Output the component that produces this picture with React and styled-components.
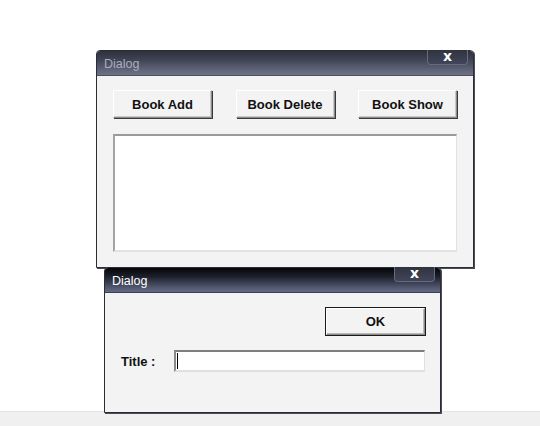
import React from "react"
import styled, { createGlobalStyle } from "styled-components"

const GlobalStyle = createGlobalStyle`
  html, body {
    margin: 0;
    padding: 0;
    background: #ffffff;
    font-family: "Liberation Sans", Arial, sans-serif;
  }
`

const Page = styled.div`
  width: 540px;
  height: 426px;
  display: flex;
  flex-direction: column;
  overflow: hidden;
`

const Desktop = styled.div`
  position: relative;
  flex: 1;
  background: #ffffff;
`

const BottomStrip = styled.div`
  height: 14px;
  background: #f0f0f0;
  border-top: 1px solid #e4e4e4;
`

const Window = styled.div`
  position: absolute;
  left: ${p => p.x}px;
  top: ${p => p.y}px;
  width: ${p => p.w}px;
  height: ${p => p.h}px;
  box-sizing: border-box;
  display: flex;
  flex-direction: column;
  background: #f3f3f3;
  border: 1px solid #2a2d36;
  border-radius: 4px 4px 0 0;
  box-shadow: 1px 1px 0 #4a4d56;
  z-index: ${p => p.z};
`

const TitleBar = styled.div`
  position: relative;
  height: ${p => p.h}px;
  flex-shrink: 0;
  display: flex;
  align-items: center;
  padding-left: 7px;
  border-radius: 3px 3px 0 0;
  background: ${p =>
    p.active
      ? "linear-gradient(to bottom, #050608 0%, #1c1f2a 35%, #50566e 80%, #646a84 100%)"
      : "linear-gradient(to bottom, #2e313c 0%, #3e4252 35%, #606579 80%, #6c7186 100%)"};
  border-bottom: 1px solid ${p => (p.active ? "#3a3f52" : "#4a4e5e")};
`

const TitleText = styled.span`
  font-size: 12.5px;
  color: ${p => (p.active ? "#ffffff" : "#a9adbd")};
  padding-top: 1px;
`

const CloseTab = styled.div`
  position: absolute;
  top: -1px;
  right: ${p => p.right}px;
  width: 41px;
  height: 15px;
  box-sizing: border-box;
  display: flex;
  align-items: center;
  justify-content: center;
  background: linear-gradient(to bottom, #30333e, #41455a);
  border: 1px solid #656a7c;
  border-top: none;
  border-radius: 0 0 4px 4px;
  color: #ffffff;
  font-family: "DejaVu Sans", sans-serif;
  font-weight: bold;
  font-size: 14px;
  line-height: 1;
  padding-bottom: 2px;
`

const Body = styled.div`
  flex: 1;
  display: flex;
  flex-direction: column;
  padding: ${p => p.pad};
`

const ButtonRow = styled.div`
  display: flex;
  justify-content: ${p => p.justify || "space-between"};
`

const Button = styled.div`
  width: 99px;
  height: ${p => (p.isDefault ? 27 : 28)}px;
  box-sizing: border-box;
  display: flex;
  align-items: center;
  justify-content: center;
  background: #f3f3f3;
  font-size: 13px;
  font-weight: bold;
  color: #111111;
  border-top: 1px solid #ffffff;
  border-left: 1px solid #ffffff;
  border-right: 1px solid #8a8a8a;
  border-bottom: 1px solid #8a8a8a;
  box-shadow: ${p =>
    p.isDefault
      ? "0 0 0 1px #1a1a1a, inset -1px -1px 0 #b8b8b8"
      : "1px 1px 0 #3a3a3a, inset -1px -1px 0 #c8c8c8"};
`

const ListBox = styled.div`
  margin-top: 16px;
  height: 118px;
  box-sizing: border-box;
  background: #ffffff;
  border-top: 2px solid #9a9a9a;
  border-left: 2px solid #a4a4a4;
  border-right: 1px solid #e2e2e2;
  border-bottom: 2px solid #e2e2e2;
`

const FieldRow = styled.div`
  margin-top: 15px;
  display: flex;
  align-items: center;
`

const Label = styled.span`
  width: 53px;
  font-size: 13px;
  font-weight: bold;
  color: #111111;
`

const TextInput = styled.div`
  width: 251px;
  height: 22px;
  box-sizing: border-box;
  background: #ffffff;
  border-top: 2px solid #7e7e7e;
  border-left: 2px solid #8a8a8a;
  border-right: 1px solid #e0e0e0;
  border-bottom: 2px solid #e0e0e0;
  display: flex;
  align-items: center;
  padding-left: 1px;
`

const Caret = styled.span`
  width: 1px;
  height: 16px;
  background: #000000;
`

export default function App() {
  return (
    <Page>
      <GlobalStyle />
      <Desktop>
        <Window x={96} y={50} w={378} h={218} z={1}>
          <TitleBar h={24}>
            <TitleText>Dialog</TitleText>
            <CloseTab right={5}>x</CloseTab>
          </TitleBar>
          <Body pad="14px 16px 16px 16px">
            <ButtonRow>
              <Button>Book Add</Button>
              <Button>Book Delete</Button>
              <Button>Book Show</Button>
            </ButtonRow>
            <ListBox />
          </Body>
        </Window>

        <Window x={104} y={267} w={337} h={146} z={2}>
          <TitleBar h={24} active>
            <TitleText active>Dialog</TitleText>
            <CloseTab right={5}>x</CloseTab>
          </TitleBar>
          <Body pad="15px 15px 0 16px">
            <ButtonRow justify="flex-end">
              <Button isDefault>OK</Button>
            </ButtonRow>
            <FieldRow>
              <Label>Title :</Label>
              <TextInput>
                <Caret />
              </TextInput>
            </FieldRow>
          </Body>
        </Window>
      </Desktop>
      <BottomStrip />
    </Page>
  )
}
